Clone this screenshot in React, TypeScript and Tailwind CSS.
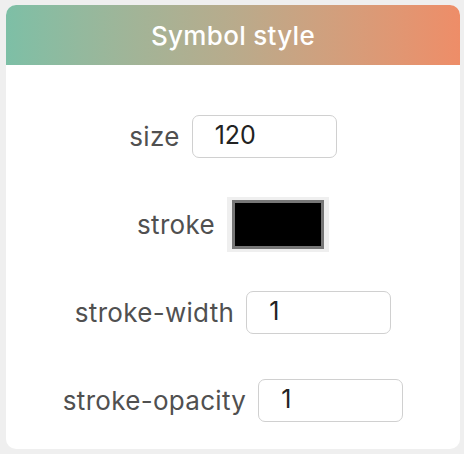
import React from 'react';

const FONT = { fontFamily: 'Inter, "Noto Sans", sans-serif' };

function TextRow({ label, value }: { label: string; value: string }) {
  return (
    <div className="flex h-[88px] items-center justify-center gap-3">
      <span className="text-[26px] tracking-[0.3px] text-[#505050]">{label}</span>
      <div className="flex h-[43px] w-[145px] items-center rounded-[7px] border border-[#d0d0d0] bg-white pl-[22px] text-[25px] text-[#222]">
        {value}
      </div>
    </div>
  );
}

export default function App() {
  return (
    <div className="min-h-[454px] bg-[#efefef] pl-[6px] pr-[4px] pt-[5px]" style={FONT}>
      <div className="overflow-hidden rounded-[10px] bg-white">
        {/* Header */}
        <div className="flex h-[60px] items-center justify-center bg-gradient-to-r from-[#7dbfa6] via-[#b8ab8c] to-[#ee8d68]">
          <h1 className="text-[26px] tracking-[0.3px] font-medium text-white">Symbol style</h1>
        </div>

        {/* Controls */}
        <div className="flex flex-col pb-[5px] pt-[27px]">
          <TextRow label="size" value="120" />
          <div className="flex h-[88px] items-center justify-center gap-3">
            <span className="text-[26px] tracking-[0.3px] text-[#505050]">stroke</span>
            <div className="flex h-[55px] w-[102px] items-center justify-center bg-[#efefef]">
              <div className="h-[49px] w-[92px] border-[3px] border-[#777] bg-black" />
            </div>
          </div>
          <TextRow label="stroke-width" value="1" />
          <TextRow label="stroke-opacity" value="1" />
        </div>
      </div>
    </div>
  );
}
